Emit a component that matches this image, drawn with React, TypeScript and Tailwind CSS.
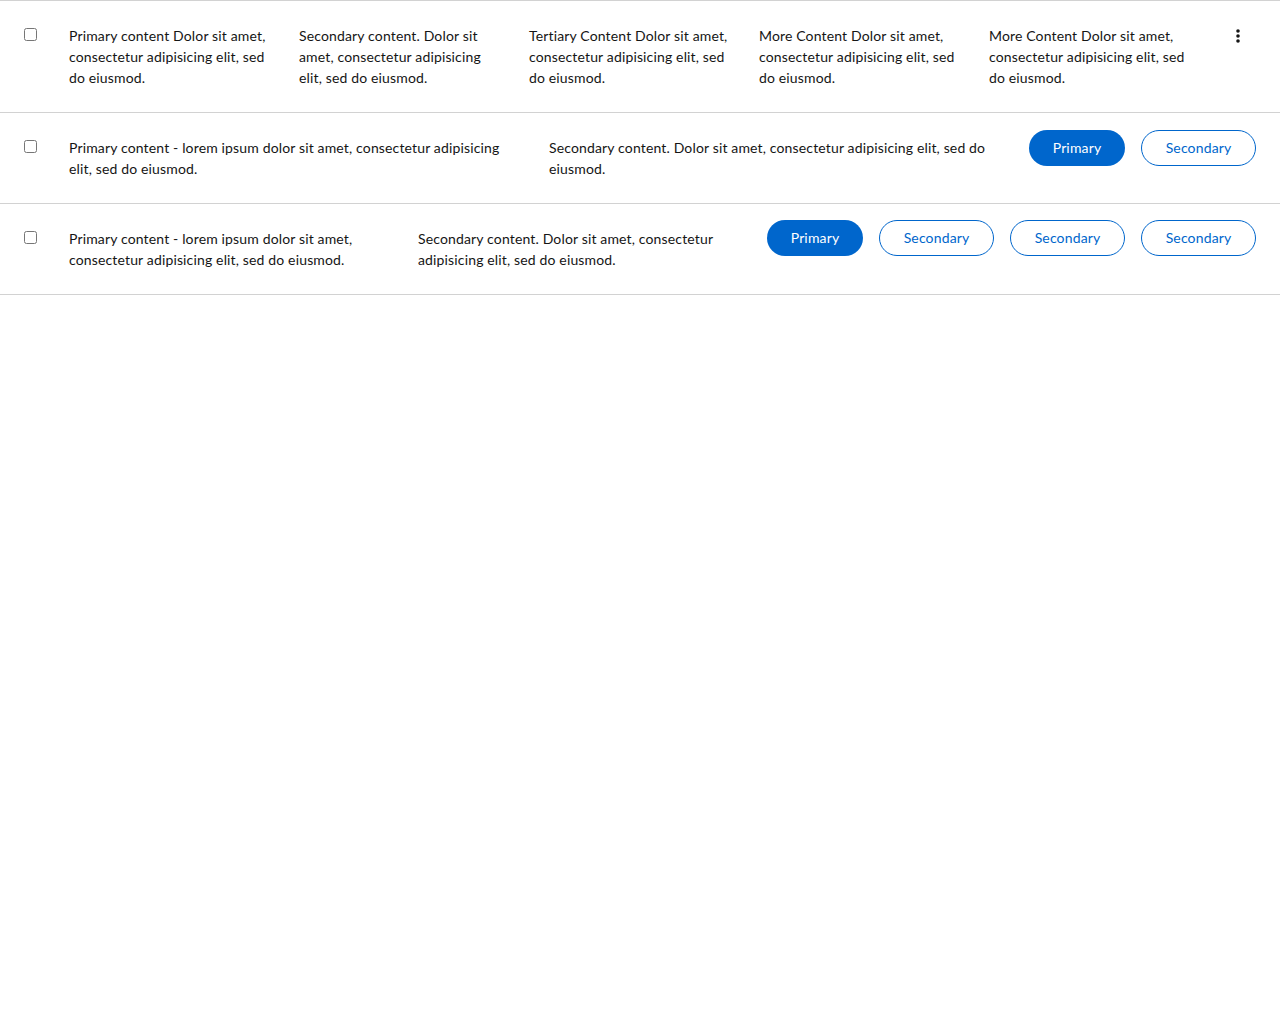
const font = { fontFamily: 'Lato, "Liberation Sans", sans-serif' }

function Kebab() {
  return (
    <svg width="4" height="14" viewBox="0 0 4 14" fill="#151515">
      <circle cx="2" cy="2" r="1.8" />
      <circle cx="2" cy="7" r="1.8" />
      <circle cx="2" cy="12" r="1.8" />
    </svg>
  )
}

function PrimaryBtn() {
  return (
    <button className="h-9 w-[96px] shrink-0 rounded-full bg-[#0066cc] text-sm tracking-[0.15px] text-white">
      Primary
    </button>
  )
}

function SecondaryBtn() {
  return (
    <button className="h-9 w-[115px] shrink-0 rounded-full border border-[#0066cc] text-sm tracking-[0.15px] text-[#0066cc]">
      Secondary
    </button>
  )
}

function Check() {
  return (
    <div className="w-[45px] shrink-0 pt-[27px]">
      <input type="checkbox" className="m-0 block h-[13px] w-[13px]" />
    </div>
  )
}

function Cell({ children }: { children: React.ReactNode }) {
  return (
    <div className="py-6 pr-7 text-sm leading-[21px] tracking-[0.15px] text-[#151515]">{children}</div>
  )
}

export default function App() {
  return (
    <div className="min-h-screen bg-white" style={font}>
      <ul className="border-t border-[#d2d2d2]">
        <li className="flex border-b border-[#d2d2d2] px-6">
          <Check />
          <div className="grid flex-1 grid-cols-5">
            <Cell>Primary content Dolor sit amet, consectetur adipisicing elit, sed do eiusmod.</Cell>
            <Cell>Secondary content. Dolor sit amet, consectetur adipisicing elit, sed do eiusmod.</Cell>
            <Cell>Tertiary Content Dolor sit amet, consectetur adipisicing elit, sed do eiusmod.</Cell>
            <Cell>More Content Dolor sit amet, consectetur adipisicing elit, sed do eiusmod.</Cell>
            <Cell>More Content Dolor sit amet, consectetur adipisicing elit, sed do eiusmod.</Cell>
          </div>
          <div className="w-[37px] shrink-0 pt-7">
            <button className="flex w-full justify-center">
              <Kebab />
            </button>
          </div>
        </li>
        <li className="flex border-b border-[#d2d2d2] px-6">
          <Check />
          <div className="grid flex-1 grid-cols-2">
            <Cell>Primary content - lorem ipsum dolor sit amet, consectetur adipisicing elit, sed do eiusmod.</Cell>
            <Cell>Secondary content. Dolor sit amet, consectetur adipisicing elit, sed do eiusmod.</Cell>
          </div>
          <div className="flex shrink-0 items-start gap-4 pt-[17px]">
            <PrimaryBtn />
            <SecondaryBtn />
          </div>
        </li>
        <li className="flex border-b border-[#d2d2d2] px-6">
          <Check />
          <div className="grid flex-1 grid-cols-2">
            <Cell>Primary content - lorem ipsum dolor sit amet, consectetur adipisicing elit, sed do eiusmod.</Cell>
            <Cell>Secondary content. Dolor sit amet, consectetur adipisicing elit, sed do eiusmod.</Cell>
          </div>
          <div className="flex shrink-0 items-start gap-4 pt-4">
            <PrimaryBtn />
            <SecondaryBtn />
            <SecondaryBtn />
            <SecondaryBtn />
          </div>
        </li>
      </ul>
    </div>
  )
}
